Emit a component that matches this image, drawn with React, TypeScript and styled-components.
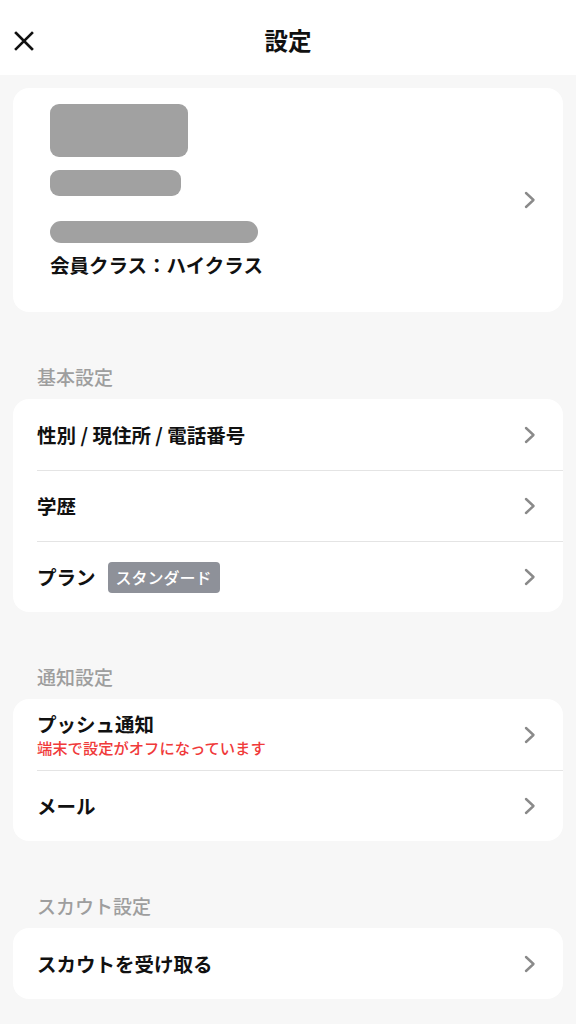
import React from "react"
import styled, { createGlobalStyle } from "styled-components"

// STYLES
const GlobalStyle = createGlobalStyle`
  html, body {
    margin: 0;
    padding: 0;
    background: #f7f7f7;
  }
  body {
    font-family: "Noto Sans CJK JP", "Noto Sans", sans-serif;
    color: #111;
  }
`

const Page = styled.div`
  min-height: 1024px;
  background: #f7f7f7;
`

const Header = styled.header`
  height: 75px;
  box-sizing: border-box;
  padding-top: 6px;
  background: #fff;
  display: grid;
  grid-template-columns: 48px 1fr 48px;
  align-items: center;
`

const CloseButton = styled.button`
  border: 0;
  background: none;
  padding: 0 0 0 13px;
  display: flex;
  align-items: center;
  cursor: pointer;
`

const Title = styled.h1`
  margin: 0;
  text-align: center;
  font-size: 23.5px;
  font-weight: 700;
  line-height: 1;
`

const Body = styled.main`
  padding: 13px 13px 24px;
`

const Card = styled.section`
  background: #fff;
  border-radius: 16px;
  overflow: hidden;
`

const ProfileCard = styled(Card)`
  display: flex;
  align-items: center;
  justify-content: space-between;
  padding: 0 27px 0 37px;
`

const ProfileInfo = styled.div`
  padding: 16px 0 35px;
  display: flex;
  flex-direction: column;
  align-items: flex-start;
`

const Masked = styled.div<{ $w: number; $h: number; $r: number; $mb: number }>`
  width: ${(p) => p.$w}px;
  height: ${(p) => p.$h}px;
  border-radius: ${(p) => p.$r}px;
  margin-bottom: ${(p) => p.$mb}px;
  background: #a1a1a1;
`

const MemberClass = styled.p`
  margin: 0;
  font-size: 19.5px;
  font-weight: 700;
  line-height: 24px;
`

const SectionTitle = styled.h2`
  margin: 53px 0 10px 24px;
  font-size: 19px;
  font-weight: 500;
  line-height: 24px;
  color: #9e9e9e;
`

const Row = styled.div`
  box-sizing: border-box;
  height: 71px;
  margin-left: 24px;
  padding-right: 27px;
  display: flex;
  align-items: center;
  justify-content: space-between;
  & + & {
    border-top: 1px solid #e4e4e4;
  }
`

const RowMain = styled.div`
  display: flex;
  flex-direction: column;
`

const RowLabel = styled.div`
  display: flex;
  align-items: center;
  font-size: 19.5px;
  font-weight: 700;
  line-height: 24px;
`

const Note = styled.span`
  font-size: 15.3px;
  font-weight: 500;
  line-height: 20px;
  color: #f03a3a;
  margin-top: 1px;
`

const Badge = styled.span`
  margin-left: 12px;
  padding: 0 8px;
  height: 31px;
  display: inline-flex;
  align-items: center;
  border-radius: 4px;
  background: #8e9199;
  color: #fff;
  font-size: 16px;
  font-weight: 500;
`

// ICONS
const CloseIcon = () => (
  <svg width="22" height="22" viewBox="0 0 22 22" fill="none">
    <path d="M3 3 L19 19 M19 3 L3 19" stroke="#111" strokeWidth="2.6" strokeLinecap="square" />
  </svg>
)

const Chevron = () => (
  <svg width="12" height="18" viewBox="0 0 12 18" fill="none">
    <path d="M2 2 L9.5 9 L2 16" stroke="#8a8a8a" strokeWidth="2.4" strokeLinecap="round" strokeLinejoin="round" />
  </svg>
)

// DATA
interface Item {
  label: string
  badge?: string
  note?: string
}

const sections: { title: string; items: Item[] }[] = [
  {
    title: "基本設定",
    items: [{ label: "性別 / 現住所 / 電話番号" }, { label: "学歴" }, { label: "プラン", badge: "スタンダード" }],
  },
  {
    title: "通知設定",
    items: [{ label: "プッシュ通知", note: "端末で設定がオフになっています" }, { label: "メール" }],
  },
  {
    title: "スカウト設定",
    items: [{ label: "スカウトを受け取る" }],
  },
]

const App = () => {
  return (
    <Page>
      <GlobalStyle />
      <Header>
        <CloseButton aria-label="閉じる">
          <CloseIcon />
        </CloseButton>
        <Title>設定</Title>
        <span />
      </Header>
      <Body>
        <ProfileCard>
          <ProfileInfo>
            <Masked $w={138} $h={53} $r={9} $mb={13} />
            <Masked $w={131} $h={26} $r={9} $mb={25} />
            <Masked $w={208} $h={22} $r={11} $mb={10} />
            <MemberClass>会員クラス：ハイクラス</MemberClass>
          </ProfileInfo>
          <Chevron />
        </ProfileCard>
        {sections.map((section) => (
          <div key={section.title}>
            <SectionTitle>{section.title}</SectionTitle>
            <Card>
              {section.items.map((item) => (
                <Row key={item.label}>
                  <RowMain>
                    <RowLabel>
                      {item.label}
                      {item.badge && <Badge>{item.badge}</Badge>}
                    </RowLabel>
                    {item.note && <Note>{item.note}</Note>}
                  </RowMain>
                  <Chevron />
                </Row>
              ))}
            </Card>
          </div>
        ))}
      </Body>
    </Page>
  )
}

export default App
